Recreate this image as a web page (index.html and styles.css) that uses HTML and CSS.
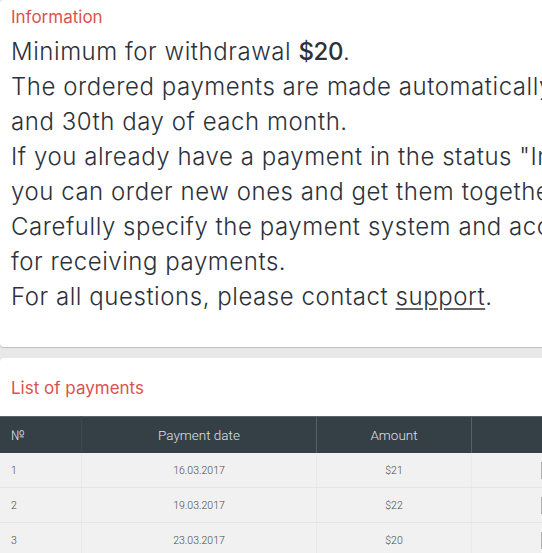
FILE: index.html
```html
<!DOCTYPE html>
<html>
<head>
<meta charset="utf-8">
<link rel="stylesheet" href="styles.css">
</head>
<body>
<div class="page">
  <section class="card info">
    <h2 class="card-title">Information</h2>
    <p class="text">Minimum for withdrawal <b>$20</b>.<br>
    The ordered payments are made automatically on the 15th<br>
    and 30th day of each month.<br>
    If you already have a payment in the status "In processing",<br>
    you can order new ones and get them together.<br>
    Carefully specify the payment system and account details<br>
    for receiving payments.<br>
    For all questions, please contact <a href="#">support</a>.</p>
  </section>
  <section class="card list">
    <h2 class="card-title list-title">List of payments</h2>
    <table class="payments">
      <thead>
        <tr><th class="c-num">№</th><th class="c-date">Payment date</th><th class="c-amount">Amount</th><th class="c-status">Status</th></tr>
      </thead>
      <tbody>
        <tr><td class="c-num">1</td><td class="c-date">16.03.2017</td><td class="c-amount">$21</td><td class="c-status"><span class="btn">Paid</span></td></tr>
        <tr><td class="c-num">2</td><td class="c-date">19.03.2017</td><td class="c-amount">$22</td><td class="c-status"><span class="btn">Paid</span></td></tr>
        <tr><td class="c-num">3</td><td class="c-date">23.03.2017</td><td class="c-amount">$20</td><td class="c-status"><span class="btn">Paid</span></td></tr>
      </tbody>
    </table>
  </section>
</div>
</body>
</html>
```
FILE: styles.css
```css
html, body {
  margin: 0;
  padding: 0;
  background: #e8e8e8;
  overflow: hidden;
}
.page {
  width: 900px;
  display: flex;
  flex-direction: column;
  gap: 11px;
}
.card {
  background: #fff;
  border-radius: 4px;
  box-shadow: 0 1px 1px rgba(0,0,0,0.18);
}
.info {
  padding: 6px 11px 33px;
}
.card-title {
  margin: 0;
  font-family: Inter, "Liberation Sans", sans-serif;
  font-weight: 400;
  font-size: 17px;
  line-height: 22px;
  color: #d9534f;
}
.text {
  margin: 6px 0 0;
  font-family: Inter, "Liberation Sans", sans-serif;
  font-weight: 300;
  font-size: 24px;
  letter-spacing: 0.55px;
  line-height: 35px;
  color: #2d313a;
  white-space: nowrap;
}
.text b { font-weight: 500; letter-spacing: -0.4px; }
.text a { color: #2d313a; text-decoration: underline; text-decoration-color: #666; text-underline-offset: 3px; }
.list { padding-top: 19px; }
.list-title { padding: 0 11px 17px; }
.payments {
  border-collapse: collapse;
  font-family: Roboto, "Liberation Sans", sans-serif;
  font-weight: 300;
}
.payments thead tr {
  background: #343f46;
  border-top: 1px solid #5d666c;
}
.payments th {
  height: 36px;
  font-size: 13.5px;
  font-weight: 300;
  color: #dfe3e5;
  text-align: center;
  border-left: 1px solid #56606a;
  padding: 0;
}
.payments th:first-child { border-left: none; }
.payments th.c-date { border-left: 1px solid #3d484f; }
.payments td {
  height: 34px;
  font-size: 10.5px;
  color: #4a4a4a;
  text-align: center;
  background: #f1f1f1;
  border-bottom: 1px solid #e4e4e4;
  border-left: 1px solid #e9e9e9;
  padding: 0;
}
.payments .c-num { width: 70px; text-align: left; padding-left: 11px; border-left: none; }
.payments .c-date { width: 234px; }
.payments .c-amount { width: 154px; }
.payments .c-status { width: 200px; text-align: left; padding-left: 69px; }
.payments th.c-status { color: transparent; }
.btn {
  display: inline-block;
  border: 2px solid #b0b0b0;
  height: 13px;
  width: 60px;
  vertical-align: middle;
  color: transparent;
}
```
